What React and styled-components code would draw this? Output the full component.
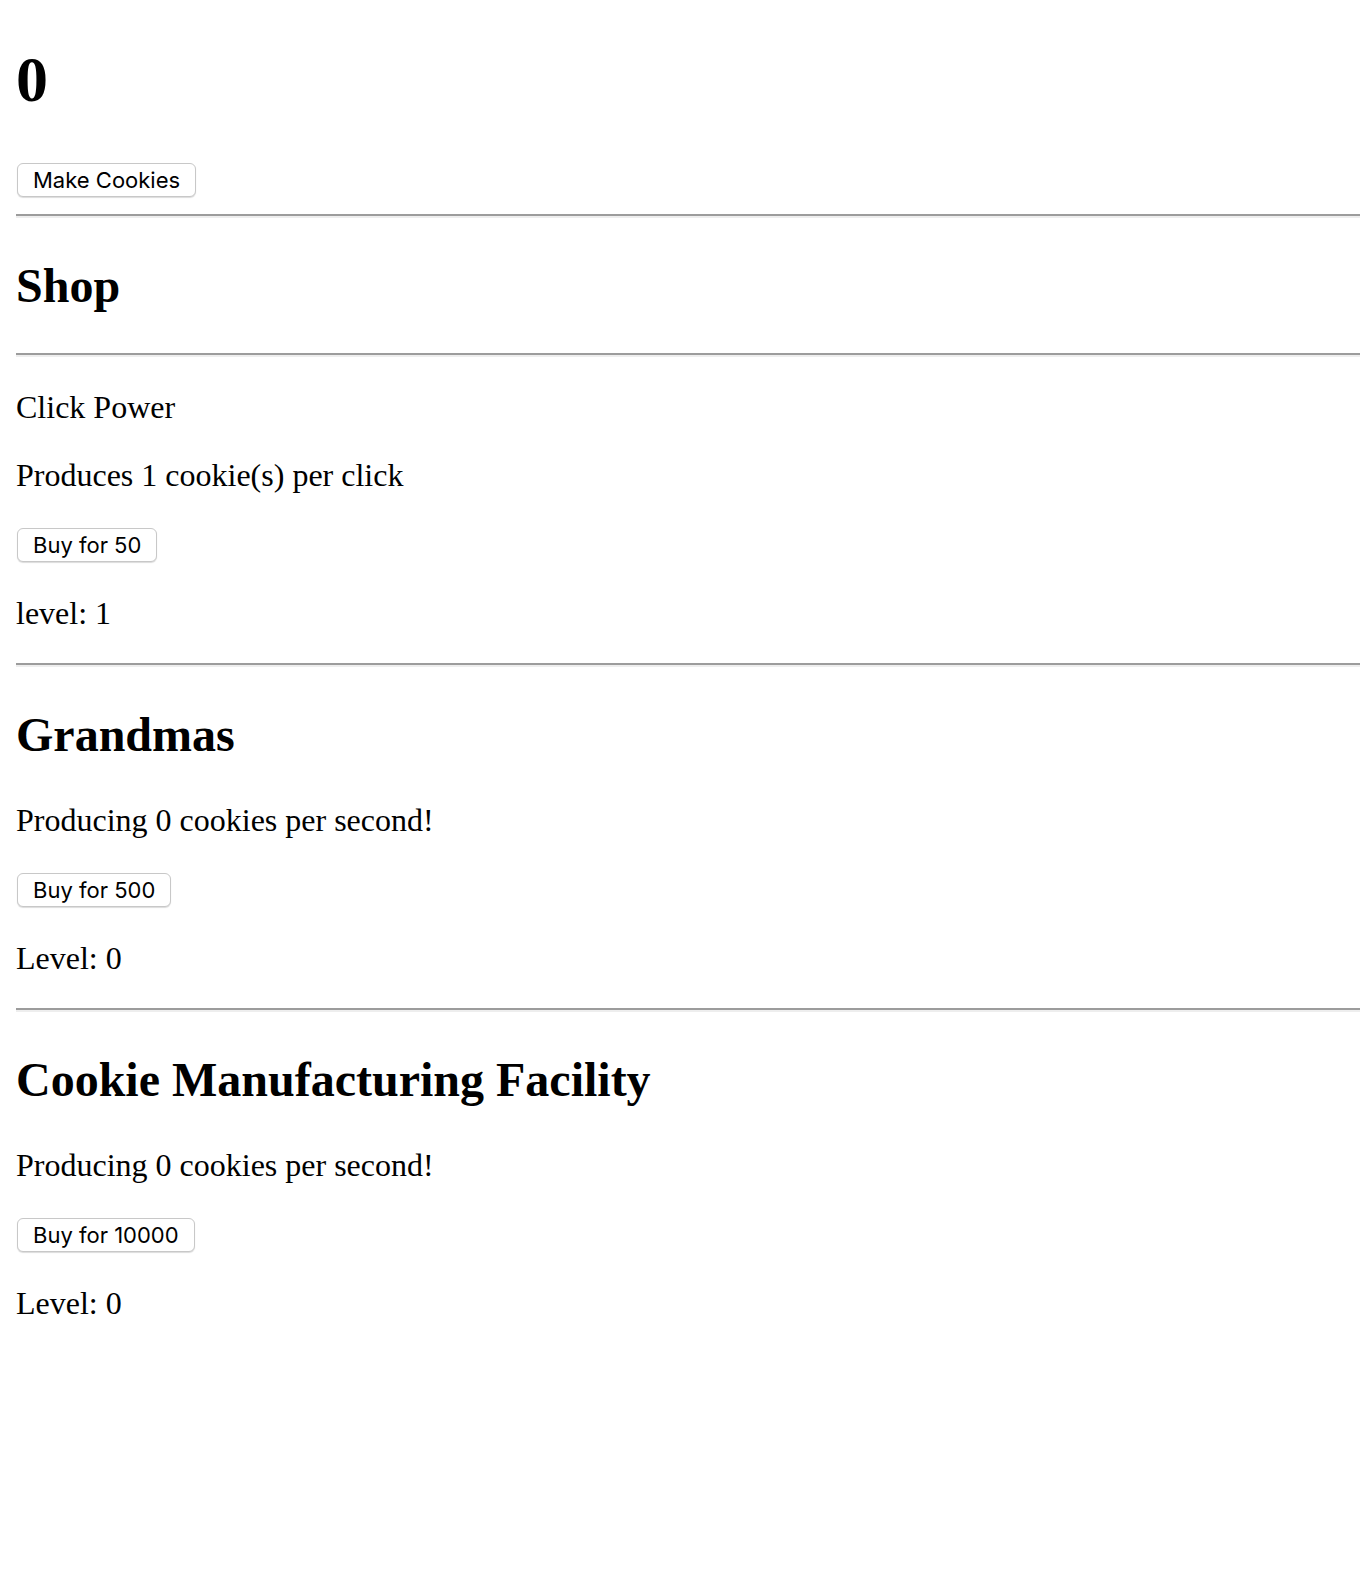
import React from "react";
import styled, { createGlobalStyle } from "styled-components";

const Global = createGlobalStyle`
  html, body { margin: 0; padding: 0; background: #fff; }
  body { font-family: "Liberation Serif", "Times New Roman", serif; color: #000; }
`;

const Page = styled.div`
  padding: 0 0 0 16px;
  display: flow-root;
  font-size: 32px;
  line-height: 1.15;
`;

const Counter = styled.h1`
  font-size: 64px;
  font-weight: bold;
  line-height: 1.15;
  margin: 42.88px 0 43.5px;
`;

const SectionTitle = styled.h2`
  font-size: 48px;
  font-weight: bold;
  line-height: 1.15;
  margin: 39.84px 0;
`;

const Text = styled.p`
  font-size: 32px;
  line-height: 1.13;
  margin: 32px 0;
`;

const ButtonLine = styled.div`
  height: 38px;
  padding-top: 3px;
  box-sizing: border-box;
  display: flex;
  align-items: flex-start;
`;

const Button = styled.button`
  font-family: Inter, "Liberation Sans", sans-serif;
  font-size: 22px;
  color: #000;
  height: 34px;
  margin: 0 0 0 1px;
  padding: 0 15px;
  border: 1px solid #c8c8c8;
  border-radius: 6px;
  background: #fff;
  box-shadow: 0 1px 1px rgba(0, 0, 0, 0.14);
  line-height: 1;
  cursor: pointer;
`;

const Rule = styled.hr`
  margin: 16px 0;
  height: 0;
  border: none;
  border-top: 2px solid #9c9c9c;
  border-bottom: 2px solid #eeeeee;
`;

const Item = ({ title, desc, price, level }) => (
  <>
    <SectionTitle>{title}</SectionTitle>
    <Text>{desc}</Text>
    <ButtonLine>
      <Button>Buy for {price}</Button>
    </ButtonLine>
    <Text>{level}</Text>
  </>
);

export default function App() {
  return (
    <>
      <Global />
      <Page>
        <Counter>0</Counter>
        <ButtonLine>
          <Button>Make Cookies</Button>
        </ButtonLine>
        <Rule />
        <SectionTitle>Shop</SectionTitle>
        <Rule />
        <Text>Click Power</Text>
        <Text>Produces 1 cookie(s) per click</Text>
        <ButtonLine>
          <Button>Buy for 50</Button>
        </ButtonLine>
        <Text>level: 1</Text>
        <Rule />
        <Item
          title="Grandmas"
          desc="Producing 0 cookies per second!"
          price={500}
          level="Level: 0"
        />
        <Rule />
        <Item
          title="Cookie Manufacturing Facility"
          desc="Producing 0 cookies per second!"
          price={10000}
          level="Level: 0"
        />
      </Page>
    </>
  );
}
